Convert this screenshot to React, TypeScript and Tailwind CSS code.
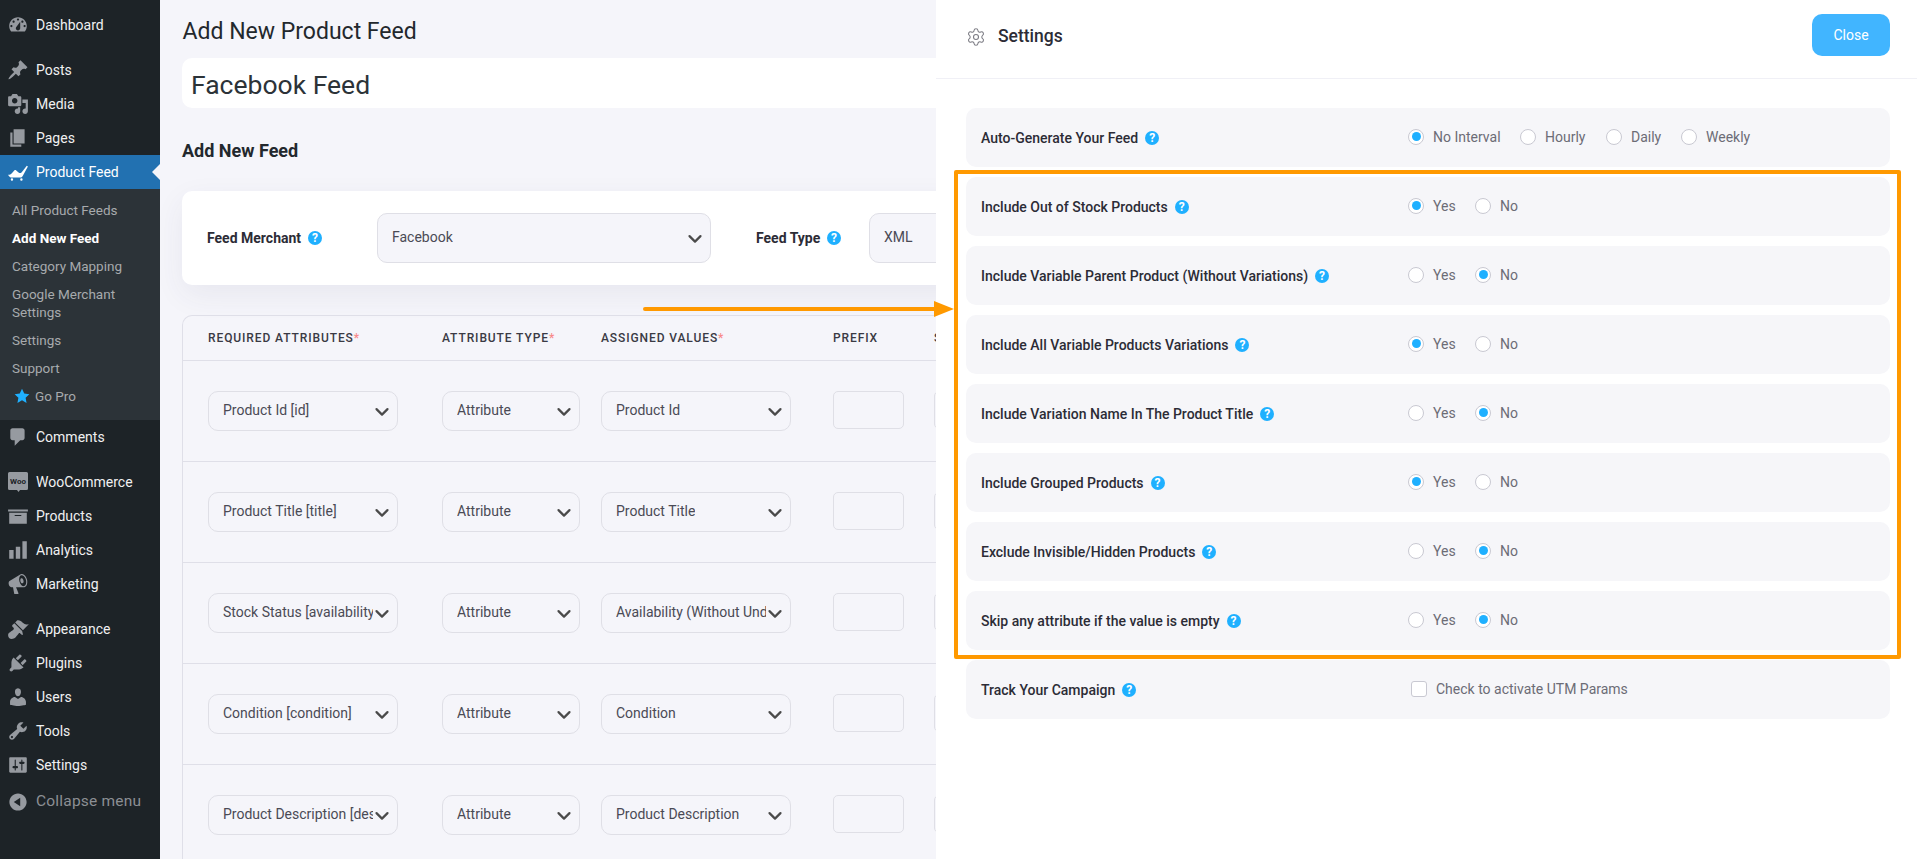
import { ChevronDown, Settings as SettingsIcon } from 'lucide-react'
import type { ReactNode } from 'react'

const font = "font-['Roboto','Liberation_Sans',sans-serif]"

// dashicons paths, on a 20x20 box
const icons: Record<string, string> = {
  dashboard: 'M3.76 16h12.48c1.1-1.37 1.76-3.11 1.76-5 0-4.42-3.58-8-8-8s-8 3.58-8 8c0 1.89.66 3.63 1.76 5zM10 4c.55 0 1 .45 1 1s-.45 1-1 1-1-.45-1-1 .45-1 1-1zM6 6c.55 0 1 .45 1 1s-.45 1-1 1-1-.45-1-1 .45-1 1-1zm8 0c.55 0 1 .45 1 1s-.45 1-1 1-1-.45-1-1 .45-1 1-1zm-5.37 5.55L12 7v6c0 1.1-.9 2-2 2s-2-.9-2-2c0-.57.24-1.08.63-1.45zM4 10c.55 0 1 .45 1 1s-.45 1-1 1-1-.45-1-1 .45-1 1-1zm12 0c.55 0 1 .45 1 1s-.45 1-1 1-1-.45-1-1 .45-1 1-1z',
  pin: 'M10.44 3.02l1.82-1.82 6.36 6.35-1.83 1.82c-1.05-.68-2.48-.57-3.41.36l-.75.75c-.92.93-1.04 2.35-.35 3.41l-1.83 1.82-2.41-2.41-2.8 2.79c-.42.42-3.38 2.71-3.8 2.29s1.86-3.39 2.28-3.81l2.79-2.79L4.1 9.36l1.83-1.82c1.05.69 2.48.57 3.41-.36l.75-.75c.93-.92 1.04-2.35.35-3.41z',
  media: 'M13 11V4c0-.55-.45-1-1-1h-1.67L9 1H5L3.67 3H2c-.55 0-1 .45-1 1v7c0 .55.45 1 1 1h10c.55 0 1-.45 1-1zM7 4.5c1.38 0 2.5 1.12 2.5 2.5S8.38 9.5 7 9.5 4.5 8.38 4.5 7 5.62 4.5 7 4.5zM14 6h5v10.5c0 1.38-1.12 2.5-2.5 2.5S14 17.88 14 16.5s1.12-2.5 2.5-2.5c.17 0 .34.02.5.05V9h-3V6zm-4 8.05V13h2v3.5c0 1.38-1.12 2.5-2.5 2.5S7 17.88 7 16.5 8.12 14 9.5 14c.17 0 .34.02.5.05z',
  pages: 'M6 15V2h10v13H6zm-1 1h8v2H3V5h2v11z',
  feed: 'M1 12.6c1.4.1 2.4-.4 3.2-1.2L6.6 8.6c.5-.5 1.3-.5 1.8 0l2.4 2.1c.7.5 1.8.3 2.6-.5L18 4.4l1 .7-4.6 8.2c-.5.9-1.2 1.7-2.2 1.7H3.6c-1 0-2-1.2-2.6-2.4z M3.4 16.8a1.1 1.1 0 1 0 2.2 0 1.1 1.1 0 1 0-2.2 0z M12 16.8a1.1 1.1 0 1 0 2.2 0 1.1 1.1 0 1 0-2.2 0z',
  comments: 'M5 2h9c1.1 0 2 .9 2 2v7c0 1.1-.9 2-2 2h-2l-5 5v-5H5c-1.1 0-2-.9-2-2V4c0-1.1.9-2 2-2z',
  products: 'M19 4v2H1V4h18zM2 7h16v10H2V7zm11 3V9H7v1h6z',
  analytics: 'M18 18V2h-4v16h4zm-6 0V7H8v11h4zm-6 0v-8H2v8h4z',
  marketing: 'M18.15 5.94c.46 1.62.38 3.22-.02 4.48-.42 1.28-1.26 2.18-2.3 2.48-.16.06-.26.06-.4.06-.06.02-.12.02-.18.02-.06.02-.14.02-.22.02h-6.8l2.22 5.5c.02.14-.06.26-.14.34-.08.1-.24.16-.34.16H6.95c-.1 0-.26-.06-.34-.16-.08-.08-.16-.2-.14-.34l-1-5.5H4.25l-.02-.02c-.5.06-1.08-.18-1.54-.62s-.88-1.08-1.06-1.88c-.24-.8-.2-1.56-.02-2.2.18-.62.58-1.08 1.06-1.3l.02-.02 9-5.4c.1-.06.18-.1.24-.16.06-.04.14-.08.24-.12.16-.08.28-.12.5-.18 1.04-.3 2.24.1 3.22.98s1.84 2.24 2.26 3.86zm-2.58 5.98h-.02c.4-.1.74-.34 1.04-.7.58-.7.86-1.76.86-3.04 0-.64-.1-1.3-.28-1.98-.34-1.36-1.02-2.5-1.78-3.24s-1.68-1.1-2.46-.88c-.82.22-1.4.96-1.7 2-.32 1.04-.28 2.36.06 3.72.38 1.36 1 2.5 1.8 3.24.78.74 1.62 1.1 2.48.88zm-2.54-7.08c.22-.04.42-.02.62.04.38.16.76.48 1.02 1s.42 1.2.42 1.78c0 .3-.04.56-.12.8-.18.48-.44.84-.86.94-.34.1-.8-.06-1.14-.4s-.64-.86-.78-1.5c-.18-.62-.12-1.24.02-1.72s.48-.84.82-.94z',
  appearance: 'M14.48 11.06L7.41 3.99l1.5-1.5c.5-.56 2.3-.47 3.51.32 1.21.8 1.43 1.28 2.91 2.1 1.18.64 2.45 1.26 4.45.85zm-.71.71L6.7 4.7 4.93 6.47c-.39.39-.39 1.02 0 1.41l1.06 1.06c.39.39.39 1.03 0 1.42-.6.6-1.43 1.11-2.21 1.69-.35.26-.7.53-1.01.84C1.43 13.23 1 14.52 1 15.66 1 17.61 2.39 19 4.34 19c1.14 0 2.43-.43 3.76-1.77.31-.31.58-.66.84-1.01.58-.78 1.09-1.61 1.69-2.21.39-.39 1.03-.39 1.42 0l1.06 1.06c.39.39 1.02.39 1.41 0z',
  plugins: 'M13.11 4.36L9.87 7.6 8 5.73l3.24-3.24c.35-.34 1.05-.2 1.56.32.52.51.66 1.21.31 1.55zm-8 1.77l.91-1.12 9.01 9.01-1.19.84c-.71.71-2.63 1.16-3.82 1.16H6.14L4.9 17.26c-.59.59-1.54.59-2.12 0-.59-.58-.59-1.53 0-2.12l1.24-1.24v-3.88c0-1.13.4-3.19 1.09-3.89zm7.26 3.97l3.24-3.24c.34-.35 1.04-.21 1.55.31.52.51.66 1.21.31 1.55l-3.24 3.25z',
  users: 'M10 9.25c-2.27 0-2.73-3.44-2.73-3.44C7 4.02 7.82 2 9.97 2c2.16 0 2.98 2.02 2.71 3.81 0 0-.41 3.44-2.68 3.44zm0 2.57L12.72 10c2.39 0 4.52 2.33 4.52 4.53v2.49s-3.65 1.13-7.24 1.13c-3.65 0-7.24-1.13-7.24-1.13v-2.49c0-2.25 1.94-4.48 4.47-4.48z',
  tools: 'M16.68 9.77c-1.34 1.34-3.3 1.67-4.95.99l-5.41 6.52c-.99.99-2.59.99-3.58 0s-.99-2.59 0-3.57l6.52-5.42c-.68-1.65-.35-3.61.99-4.95 1.28-1.28 3.12-1.62 4.72-1.06l-2.89 2.89 2.82 2.82 2.86-2.87c.53 1.58.18 3.39-1.08 4.65zM3.81 16.21c.4.39 1.04.39 1.43 0 .4-.4.4-1.04 0-1.43-.39-.4-1.03-.4-1.43 0-.39.39-.39 1.03 0 1.43z',
  settings: 'M18 16V4c0-.55-.45-1-1-1H3c-.55 0-1 .45-1 1v12c0 .55.45 1 1 1h14c.55 0 1-.45 1-1zM8 11h1c.55 0 1 .45 1 1s-.45 1-1 1H8v1.5c0 .28-.22.5-.5.5s-.5-.22-.5-.5V13H6c-.55 0-1-.45-1-1s.45-1 1-1h1V5.5c0-.28.22-.5.5-.5s.5.22.5.5V11zm5-2h-1c-.55 0-1-.45-1-1s.45-1 1-1h1V5.5c0-.28.22-.5.5-.5s.5.22.5.5V7h1c.55 0 1 .45 1 1s-.45 1-1 1h-1v5.5c0 .28-.22.5-.5.5s-.5-.22-.5-.5V9z',
  collapse: 'M10 2.16c4.33 0 7.84 3.51 7.84 7.84s-3.51 7.84-7.84 7.84S2.16 14.33 2.16 10 5.71 2.16 10 2.16zm2 11.72V6.12L6.18 9.97z',
}

function Dash({ name, white }: { name: string; white?: boolean }) {
  return (
    <svg viewBox="0 0 20 20" className={`h-[22px] w-[22px] shrink-0 ${white ? 'fill-white' : 'fill-[#969aa0]'}`}>
      <path fillRule={name === 'dashboard' || name === 'settings' ? 'evenodd' : undefined} d={icons[name]} />
    </svg>
  )
}

function WooIcon() {
  return (
    <svg viewBox="0 0 22 22" className="h-[22px] w-[22px] shrink-0">
      <path fill="#969aa0" d="M2.5 1h17A1.5 1.5 0 0 1 21 2.500v15a1.500 1.500 0 0 1-1.500 1.500H13l-1.500 2-1.500-2H2.500A1.500 1.500 0 0 1 1 17.500v-15A1.500 1.500 0 0 1 2.500 1z" />
      <text x="11" y="13" textAnchor="middle" fontSize="8" fontWeight="700" fill="#1d2327" fontFamily="Roboto, sans-serif">Woo</text>
    </svg>
  )
}

function MenuItem({ icon, label, muted }: { icon: string; label: string; muted?: boolean }) {
  return (
    <div className="flex h-[34px] items-center pl-[7px]">
      {icon === 'woo' ? <WooIcon /> : <Dash name={icon} />}
      <span className={muted ? 'ml-[7px] text-[15.5px] tracking-[0.2px] text-[#8c8f94]' : 'ml-[7px] text-[14px] text-[#f0f0f1]'}>{label}</span>
    </div>
  )
}

function SubItem({ children, bold }: { children: ReactNode; bold?: boolean }) {
  return (
    <div className={`px-[12px] text-[13.5px] leading-[18px] ${bold ? 'font-bold text-white' : 'text-[#a7aaad]'}`}>{children}</div>
  )
}

function Sidebar() {
  return (
    <aside className="flex w-[160px] shrink-0 flex-col bg-[#1d2327] pt-[8px]">
      <MenuItem icon="dashboard" label="Dashboard" />
      <div className="mt-[11px]">
        <MenuItem icon="pin" label="Posts" />
        <MenuItem icon="media" label="Media" />
        <MenuItem icon="pages" label="Pages" />
      </div>
      <div className="relative flex h-[34px] items-center bg-[#2271b1] pl-[7px]">
        <Dash name="feed" white />
        <span className="ml-[7px] text-[14px] text-white">Product Feed</span>
        <div className="absolute right-0 top-[9px] h-0 w-0 border-y-[8px] border-r-[8px] border-y-transparent border-r-[#f5f5fa]" />
      </div>
      <div className="flex h-[231px] flex-col gap-[10px] bg-[#2c3338] pt-[12px]">
        <SubItem>All Product Feeds</SubItem>
        <SubItem bold>Add New Feed</SubItem>
        <SubItem>Category Mapping</SubItem>
        <SubItem>Google Merchant Settings</SubItem>
        <SubItem>Settings</SubItem>
        <SubItem>Support</SubItem>
        <div className="flex items-center pl-[14px] text-[13.5px] leading-[18px] text-[#a7aaad]">
          <svg viewBox="0 0 20 20" className="mr-[5px] h-[16px] w-[16px] fill-[#1fb0ff]">
            <path d="M10 1l2.8 6 6.400.8-4.700 4.400 1.200 6.400L10 15.400l-5.700 3.200 1.200-6.400L.8 7.800 7.200 7z" />
          </svg>
          Go Pro
        </div>
      </div>
      <MenuItem icon="comments" label="Comments" />
      <div className="mt-[11px]">
        <MenuItem icon="woo" label="WooCommerce" />
        <MenuItem icon="products" label="Products" />
        <MenuItem icon="analytics" label="Analytics" />
        <MenuItem icon="marketing" label="Marketing" />
      </div>
      <div className="mt-[11px]">
        <MenuItem icon="appearance" label="Appearance" />
        <MenuItem icon="plugins" label="Plugins" />
        <MenuItem icon="users" label="Users" />
        <MenuItem icon="tools" label="Tools" />
        <MenuItem icon="settings" label="Settings" />
        <div className="mt-[3px]">
          <MenuItem icon="collapse" label="Collapse menu" muted />
        </div>
      </div>
    </aside>
  )
}

function Help() {
  return (
    <span className="inline-flex h-[14px] w-[14px] shrink-0 items-center justify-center rounded-full bg-[#1fb0ff] text-[12px] font-bold leading-none text-white">?</span>
  )
}

function SelectBox({ value, width, tall }: { value: string; width: string; tall?: boolean }) {
  return (
    <div className={`relative flex shrink-0 items-center rounded-[10px] border border-[#dfdfe6] bg-[#f5f5fa] pl-[14px] pr-[24px] text-[14px] text-[#4a4a55] ${width} ${tall ? 'h-[50px]' : 'h-[40px]'}`}>
      <span className="-mt-[2px] overflow-hidden whitespace-nowrap">{value}</span>
      <ChevronDown size={22} strokeWidth={2.4} className="absolute right-[4px] top-1/2 -translate-y-[46%] text-[#4a4a4a]" />
    </div>
  )
}

const attributeRows = [
  ['Product Id [id]', 'Product Id'],
  ['Product Title [title]', 'Product Title'],
  ['Stock Status [availability]', 'Availability (Without Underscore)'],
  ['Condition [condition]', 'Condition'],
  ['Product Description [description]', 'Product Description'],
]

function Header({ label, star, width }: { label: string; star?: boolean; width: string }) {
  return (
    <div className={`shrink-0 text-[12px] font-medium tracking-[0.9px] text-[#3a3a44] ${width}`}>
      {label}
      {star && <span className="text-[#f88a8a]">*</span>}
    </div>
  )
}

function FeedForm() {
  return (
    <main className="w-[776px] shrink-0 overflow-hidden bg-[#f5f5fa] pl-[22px]">
      <div className="w-[900px]">
        <h1 className="pl-[0.5px] pt-[16px] text-[23px] font-normal leading-[32px] text-[#23282d]">Add New Product Feed</h1>
        <div className="mt-[10px] flex h-[50px] items-center rounded-[10px] bg-white pl-[9px] pt-[3px] text-[26.500px] font-normal text-[#2c3338]">Facebook Feed</div>
        <h2 className="mt-[32px] text-[18px] font-bold leading-[22px] text-[#23282d]">Add New Feed</h2>
        <div className="mt-[29px] flex h-[94px] items-center rounded-[10px] bg-white pl-[25px] shadow-[0_10px_30px_rgba(60,60,100,0.07)]">
          <span className="w-[94px] shrink-0 whitespace-nowrap text-[14px] font-bold text-[#2c2c36]">Feed Merchant</span>
          <span className="ml-[7px] flex"><Help /></span>
          <span className="ml-[55px] flex"><SelectBox value="Facebook" width="w-[334px]" tall /></span>
          <span className="ml-[45px] w-[64px] shrink-0 whitespace-nowrap text-[14px] font-bold text-[#2c2c36]">Feed Type</span>
          <span className="ml-[7px] flex"><Help /></span>
          <span className="ml-[28px] flex"><SelectBox value="XML" width="w-[334px]" tall /></span>
        </div>
        <div className="mt-[30px] rounded-t-[10px] border-l border-t border-[#dfdfe8]">
          <div className="flex h-[45px] items-center border-b border-[#dfdfe8] pl-[25px]">
            <Header label="REQUIRED ATTRIBUTES" star width="w-[234px]" />
            <Header label="ATTRIBUTE TYPE" star width="w-[159px]" />
            <Header label="ASSIGNED VALUES" star width="w-[232px]" />
            <Header label="PREFIX" width="w-[101px]" />
            <Header label="SUFFIX" width="w-[100px]" />
          </div>
          {attributeRows.map((row) => (
            <div key={row[0]} className="flex h-[101px] items-center border-b border-[#dfdfe8] pl-[25px]">
              <SelectBox value={row[0]} width="w-[190px]" />
              <span className="ml-[44px] flex"><SelectBox value="Attribute" width="w-[138px]" /></span>
              <span className="ml-[21px] flex"><SelectBox value={row[1]} width="w-[190px]" /></span>
              <div className="-mt-[2px] ml-[42px] h-[38px] w-[71px] rounded-[5px] border border-[#dfdfe6]" />
              <div className="-mt-[2px] ml-[30px] h-[38px] w-[71px] rounded-[5px] border border-[#dfdfe6]" />
            </div>
          ))}
        </div>
      </div>
    </main>
  )
}

function Radio({ label, checked, width }: { label: string; checked?: boolean; width?: string }) {
  return (
    <div className={`flex items-center ${width ?? ''}`}>
      <span className="-mt-[2px] flex h-[16px] w-[16px] items-center justify-center rounded-full border border-[#c9c9d2] bg-white">
        {checked && <span className="h-[9px] w-[9px] rounded-full bg-[#1fb0ff]" />}
      </span>
      <span className="ml-[9px] text-[14px] text-[#6c6c76]">{label}</span>
    </div>
  )
}

const settingRows = [
  { label: 'Include Out of Stock Products', yes: true },
  { label: 'Include Variable Parent Product (Without Variations)', yes: false },
  { label: 'Include All Variable Products Variations', yes: true },
  { label: 'Include Variation Name In The Product Title', yes: false },
  { label: 'Include Grouped Products', yes: true },
  { label: 'Exclude Invisible/Hidden Products', yes: false },
  { label: 'Skip any attribute if the value is empty', yes: false },
]

function SettingRow({ label, children }: { label: string; children: ReactNode }) {
  return (
    <div className="flex h-[59px] items-center rounded-[10px] bg-[#f6f6f9] pl-[15px]">
      <div className="flex w-[427px] items-center">
        <span className="pt-[1px] text-[14px] font-medium text-[#2c2c36]">{label}</span>
        <span className="ml-[7px] flex"><Help /></span>
      </div>
      {children}
    </div>
  )
}

function SettingsPanel() {
  return (
    <section className="relative min-w-0 flex-1 bg-white">
      <div className="flex h-[79px] items-center justify-between border-b border-[#f0f0f6] pl-[30px] pr-[27px]">
        <div className="-mt-[5px] flex items-center">
          <SettingsIcon size={20} strokeWidth={1.3} className="text-[#7c7c84]" />
          <span className="ml-[12px] text-[17.500px] font-medium text-[#2c2c36]">Settings</span>
        </div>
        <div className="mt-[-8px] flex h-[42px] w-[78px] items-center justify-center rounded-[10px] bg-[#41b5ff] text-[14px] text-white">Close</div>
      </div>
      <div className="flex flex-col gap-[10px] pl-[30px] pr-[27px] pt-[29px]">
        <SettingRow label="Auto-Generate Your Feed">
          <Radio label="No Interval" checked width="w-[112px]" />
          <Radio label="Hourly" width="w-[86px]" />
          <Radio label="Daily" width="w-[75px]" />
          <Radio label="Weekly" />
        </SettingRow>
        {settingRows.map((row) => (
          <SettingRow key={row.label} label={row.label}>
            <Radio label="Yes" checked={row.yes} width="w-[67px]" />
            <Radio label="No" checked={!row.yes} />
          </SettingRow>
        ))}
        <SettingRow label="Track Your Campaign">
          <div className="flex items-center pl-[3px]">
            <span className="-mt-[2px] h-[16px] w-[16px] rounded-[3px] border border-[#c9c9d2] bg-white" />
            <span className="ml-[9px] text-[14px] text-[#6c6c76]">Check to activate UTM Params</span>
          </div>
        </SettingRow>
      </div>
    </section>
  )
}

export default function App() {
  return (
    <div className={`relative flex h-[859px] w-[1917px] overflow-hidden ${font}`}>
      <Sidebar />
      <FeedForm />
      <SettingsPanel />
      {/* annotation drawn over the screenshot */}
      <div className="pointer-events-none absolute left-[954px] top-[170px] h-[489px] w-[947px] rounded-[2px] border-[4px] border-[#ff9900]" />
      <div className="pointer-events-none absolute left-[643px] top-[307px] h-[4px] w-[295px] rounded-l-full bg-[#ff9900]" />
      <div className="pointer-events-none absolute left-[934px] top-[301px] h-0 w-0 border-y-[8.500px] border-l-[20px] border-y-transparent border-l-[#ff9900]" />
    </div>
  )
}
